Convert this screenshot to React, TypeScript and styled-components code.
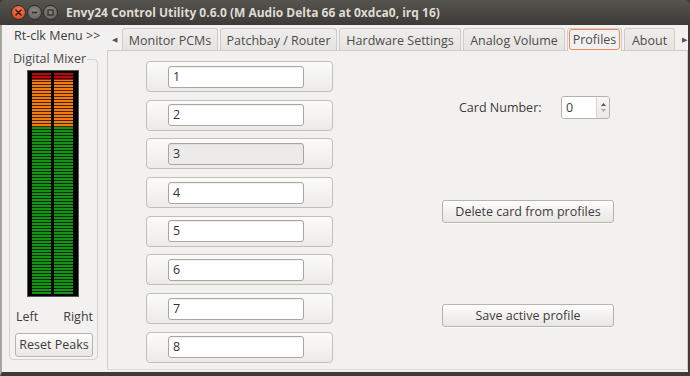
import * as React from 'react';
import styled, { createGlobalStyle } from 'styled-components';

const Global = createGlobalStyle`
    html, body {
        margin: 0;
        padding: 0;
        background: #3c3b37;
    }
    * {
        box-sizing: border-box;
    }
`;

const Window = styled.div`
    width: 690px;
    height: 376px;
    display: flex;
    flex-direction: column;
    font-family: "Open Sans", "Noto Sans", sans-serif;
    font-size: 12px;
    color: #3c3c3c;
    overflow: hidden;
`;

const TitleBar = styled.div`
    height: 25px;
    flex: none;
    display: flex;
    align-items: center;
    padding-left: 11px;
    background: linear-gradient(#55544f, #3c3b37);
    border-radius: 5px 5px 0 0;
`;

const WinButtons = styled.div`
    display: flex;
    gap: 1px;
    align-items: center;
    width: 55px;
`;

const WinButton = styled.div<{ $close?: boolean }>`
    width: 15px;
    height: 15px;
    border-radius: 50%;
    display: flex;
    align-items: center;
    justify-content: center;
    background: ${p => p.$close
        ? 'radial-gradient(circle at 50% 35%, #f47b4d, #d8421b)'
        : 'radial-gradient(circle at 50% 35%, #8a8882, #5f5d58)'};
    border: 1px solid #2c2b28;
`;

const Title = styled.div`
    color: #dfdbd2;
    font-weight: bold;
    font-size: 12px;
    white-space: nowrap;
`;

const Body = styled.div`
    flex: 1;
    display: flex;
    background: #f2f1f0;
    border-left: 2px solid #a8a59f;
    border-right: 2px solid #3c3b37;
    border-bottom: 4px solid #3c3b37;
    min-height: 0;
`;

const LeftPane = styled.div`
    width: 105px;
    flex: none;
    display: flex;
    flex-direction: column;
`;

const MenuLabel = styled.div`
    height: 27px;
    padding: 3px 0 0 12px;
    line-height: 16px;
    font-size: 12.5px;
`;

const Frame = styled.fieldset`
    margin: 0 0 0 7px;
    width: 89px;
    height: 308px;
    border: 1px solid #d6d2cd;
    border-radius: 4px;
    padding: 2px 4px 0 5px;
    display: flex;
    flex-direction: column;
    align-items: stretch;
`;

const Legend = styled.legend`
    padding: 0 1px;
    margin-left: -3px;
    font-size: 12.5px;
    color: #4a4a4a;
    line-height: 14px;
`;

const Meter = styled.div`
    margin: 2px 0 0 12px;
    width: 52px;
    height: 227px;
    background: #000;
    border: 1px solid #555;
    display: flex;
    gap: 3px;
    padding: 2px 5px 2px 4px;
`;

const MeterColumn = styled.div`
    flex: 1;
    background:
        repeating-linear-gradient(to bottom, transparent 0 2px, rgba(0, 0, 0, 0.7) 2px 3px),
        linear-gradient(to bottom, #b50d0d 0 7px, #f27b12 7px 54px, #149414 54px 100%);
`;

const ChannelLabels = styled.div`
    display: flex;
    justify-content: space-between;
    padding: 0 0 0 1px;
    margin-top: 11px;
    height: 18px;
    line-height: 18px;
    font-size: 12.5px;
`;

const Button = styled.button<{ $width?: number; $mt?: number }>`
    all: unset;
    box-sizing: border-box;
    height: 23px;
    width: ${p => p.$width ? `${p.$width}px` : 'auto'};
    margin-top: ${p => p.$mt ?? 0}px;
    border: 1px solid #b6b2ad;
    border-radius: 3px;
    background: linear-gradient(#fcfcfb, #e9e7e4);
    text-align: center;
    font-family: "Open Sans", "Noto Sans", sans-serif;
    font-size: 12.5px;
    line-height: 21px;
    color: #3c3c3c;
    box-shadow: 0 1px 0 rgba(255, 255, 255, 0.8);
`;

const ResetButton = styled(Button)`
    height: 24px;
    line-height: 22px;
`;

const Notebook = styled.div`
    flex: 1;
    display: flex;
    flex-direction: column;
    min-width: 0;
`;

const TabRow = styled.div`
    height: 25px;
    flex: none;
    display: flex;
    align-items: flex-end;
    padding-left: 4px;
    gap: 2px;
`;

const Arrow = styled.div<{ $right?: boolean }>`
    width: 10px;
    height: 22px;
    display: flex;
    align-items: center;
    justify-content: center;
    color: #555;
    font-size: 7px;
    margin-right: ${p => p.$right ? 0 : '2px'};
    margin-left: ${p => p.$right ? '4px' : 0};
`;

const Tab = styled.div<{ $width: number; $active?: boolean }>`
    width: ${p => p.$width}px;
    height: ${p => p.$active ? 23 : 22}px;
    flex: none;
    border: 1px solid #cfcbc6;
    border-bottom: none;
    border-radius: 3px 3px 0 0;
    background: ${p => p.$active ? '#f2f1f0' : 'linear-gradient(#efedeb, #e6e4e1)'};
    display: flex;
    align-items: center;
    justify-content: center;
    font-size: 12.5px;
    color: #4c4c4c;
    padding: 1px 1px 0;
    position: relative;
    top: ${p => p.$active ? 1 : 0}px;
`;

const FocusRing = styled.div`
    flex: 1;
    height: 100%;
    border: 1px solid #f08a5d;
    border-radius: 3px;
    display: flex;
    align-items: center;
    justify-content: center;
    margin-bottom: 2px;
`;

const Page = styled.div`
    flex: 1;
    border: 1px solid #cfcbc6;
    border-bottom-color: #dedbd7;
    margin-bottom: 2px;
    display: flex;
`;

const ProfileList = styled.div`
    display: flex;
    flex-direction: column;
    gap: 7.7px;
    padding: 10px 0 0 38px;
    width: 225px;
    flex: none;
`;

const ProfileRow = styled.div`
    height: 31px;
    width: 187px;
    border: 1px solid #c2beb9;
    border-radius: 4px;
    background: linear-gradient(#fbfbfa, #edebe9);
    display: flex;
    align-items: center;
    padding-left: 21px;
`;

const Entry = styled.div<{ $disabled?: boolean }>`
    width: 136px;
    height: 22px;
    border: 1px solid #a9a59f;
    border-radius: 3px;
    background: ${p => p.$disabled ? '#edebe9' : '#fff'};
    padding-left: 4px;
    line-height: 20px;
    font-size: 12.5px;
    color: #333;
    box-shadow: inset 0 1px 1px rgba(0, 0, 0, 0.06);
`;

const RightPane = styled.div`
    display: flex;
    flex-direction: column;
    padding: 45px 0 0 109px;
`;

const CardRow = styled.div`
    display: flex;
    align-items: center;
    padding-left: 17px;
    height: 22px;
`;

const CardLabel = styled.span`
    width: 102px;
    font-size: 12.5px;
`;

const Spin = styled.div`
    display: flex;
    width: 49px;
    height: 23px;
    border: 1px solid #b4b0ab;
    border-radius: 3px;
    overflow: hidden;
`;

const SpinText = styled.div`
    flex: 1;
    background: #fff;
    padding-left: 4px;
    line-height: 21px;
    font-size: 12.5px;
`;

const SpinArrows = styled.div`
    width: 13px;
    border-left: 1px solid #d8d5d1;
    background: linear-gradient(#f8f7f6, #ebe9e7);
    display: flex;
    flex-direction: column;
    align-items: center;
    justify-content: center;
    gap: 3px;
`;

const CloseIcon = () => (
    <svg width="7" height="7" viewBox="0 0 7 7">
        <path d="M1 1L6 6M6 1L1 6" stroke="#3a1a0e" strokeWidth="1.6" strokeLinecap="round" />
    </svg>
);

const MinIcon = () => (
    <svg width="7" height="7" viewBox="0 0 7 7">
        <path d="M1 3.5H6" stroke="#2f2e2b" strokeWidth="1.6" />
    </svg>
);

const MaxIcon = () => (
    <svg width="7" height="7" viewBox="0 0 7 7">
        <rect x="1" y="1" width="5" height="5" fill="none" stroke="#2f2e2b" strokeWidth="1.3" />
    </svg>
);

const tabs = [
    { label: 'Monitor PCMs', width: 96 },
    { label: 'Patchbay / Router', width: 117 },
    { label: 'Hardware Settings', width: 122 },
    { label: 'Analog Volume', width: 102 },
    { label: 'Profiles', width: 55, active: true },
    { label: 'About', width: 51 },
];

export default function App() {
    return <Window>
        <Global />
        <TitleBar>
            <WinButtons>
                <WinButton $close><CloseIcon /></WinButton>
                <WinButton><MinIcon /></WinButton>
                <WinButton><MaxIcon /></WinButton>
            </WinButtons>
            <Title>Envy24 Control Utility 0.6.0 (M Audio Delta 66 at 0xdca0, irq 16)</Title>
        </TitleBar>
        <Body>
            <LeftPane>
                <MenuLabel>Rt-clk Menu &gt;&gt;</MenuLabel>
                <Frame>
                    <Legend>Digital Mixer</Legend>
                    <Meter>
                        <MeterColumn />
                        <MeterColumn />
                    </Meter>
                    <ChannelLabels>
                        <span>Left</span>
                        <span>Right</span>
                    </ChannelLabels>
                    <ResetButton $mt={7}>Reset Peaks</ResetButton>
                </Frame>
            </LeftPane>
            <Notebook>
                <TabRow>
                    <Arrow>◀</Arrow>
                    {tabs.map(t => (
                        <Tab key={t.label} $width={t.width} $active={t.active}>
                            {t.active ? <FocusRing>{t.label}</FocusRing> : t.label}
                        </Tab>
                    ))}
                    <Arrow $right>▶</Arrow>
                </TabRow>
                <Page>
                    <ProfileList>
                        {[1, 2, 3, 4, 5, 6, 7, 8].map(n => (
                            <ProfileRow key={n}>
                                <Entry $disabled={n === 3}>{n}</Entry>
                            </ProfileRow>
                        ))}
                    </ProfileList>
                    <RightPane>
                        <CardRow>
                            <CardLabel>Card Number:</CardLabel>
                            <Spin>
                                <SpinText>0</SpinText>
                                <SpinArrows>
                                    <svg width="5" height="3" viewBox="0 0 5 3"><path d="M0 3L2.5 0L5 3Z" fill="#555" /></svg>
                                    <svg width="5" height="3" viewBox="0 0 5 3"><path d="M0 0L2.5 3L5 0Z" fill="#aaa" /></svg>
                                </SpinArrows>
                            </Spin>
                        </CardRow>
                        <Button $width={172} $mt={82}>Delete card from profiles</Button>
                        <Button $width={172} $mt={81}>Save active profile</Button>
                    </RightPane>
                </Page>
            </Notebook>
        </Body>
    </Window>;
}
